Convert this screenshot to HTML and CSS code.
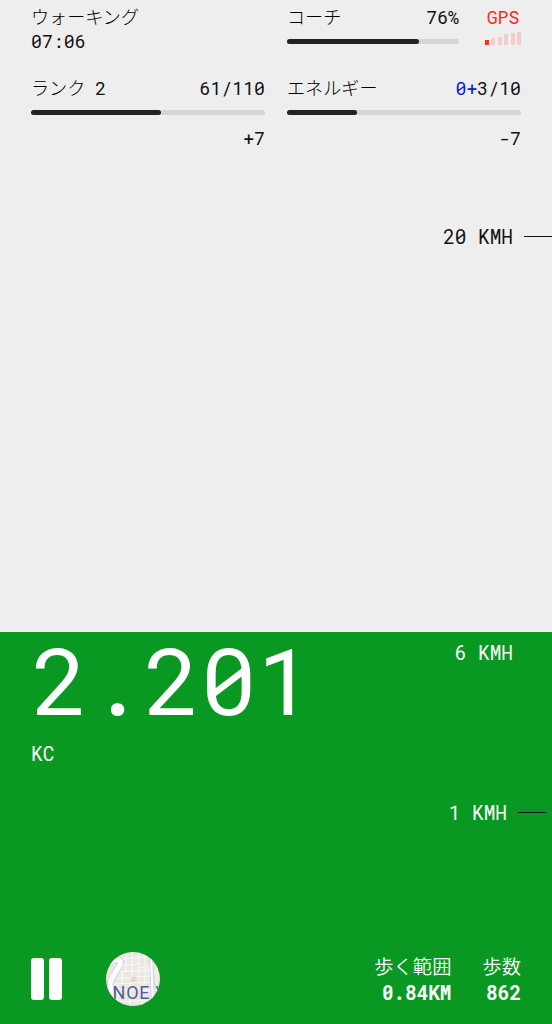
FILE: index.html
```html
<!DOCTYPE html>
<html lang="ja">
<head>
    <meta charset="UTF-8">
    <meta name="viewport" content="width=device-width, initial-scale=1.0">
    <title>ウォーキング</title>
    <link rel="stylesheet" href="styles.css">
</head>
<body>
    <main class="screen">
        <!-- 上部: ステータス -->
        <section class="top">
            <div class="stats">
                <div class="stat">
                    <div class="row"><span class="jp">ウォーキング</span></div>
                    <div class="time">07:06</div>
                </div>
                <div class="coach-group">
                    <div class="stat coach">
                        <div class="row"><span class="jp">コーチ</span><span>76%</span></div>
                        <div class="bar"><div class="bar-fill" style="width: 76.5%"></div></div>
                    </div>
                    <div class="gps">
                        <div class="row">GPS</div>
                        <div class="signal">
                            <i class="on" style="height: 5px"></i>
                            <i style="height: 7px"></i>
                            <i style="height: 8px"></i>
                            <i style="height: 11px"></i>
                            <i style="height: 12px"></i>
                            <i style="height: 13px"></i>
                        </div>
                    </div>
                </div>
                <div class="stat">
                    <div class="row"><div class="rank"><span class="jp">ランク</span><span>2</span></div><span>61/110</span></div>
                    <div class="bar"><div class="bar-fill" style="width: 55.5%"></div></div>
                    <div class="change">+7</div>
                </div>
                <div class="stat">
                    <div class="row"><span class="jp">エネルギー</span><span><span class="bonus">0+</span>3/10</span></div>
                    <div class="bar"><div class="bar-fill" style="width: 30%"></div></div>
                    <div class="change">-7</div>
                </div>
            </div>
            <div class="mark mark-max">20 KMH<span class="tick"></span></div>
        </section>

        <!-- 下部: 現在の値 -->
        <section class="bottom">
            <div class="current">
                <div>
                    <div class="score">2.201</div>
                    <div class="unit">KC</div>
                </div>
                <div class="speed">6 KMH</div>
            </div>
            <div class="mark mark-min">1 KMH<span class="tick"></span></div>
            <div class="footer">
                <button class="pause" type="button" aria-label="一時停止"><i></i><i></i></button>
                <!-- 地図 -->
                <svg class="map" viewBox="0 0 54 54">
                    <defs><clipPath id="round"><circle cx="27" cy="27" r="27"/></clipPath></defs>
                    <g clip-path="url(#round)">
                        <rect width="54" height="54" fill="#ebe7e2"/>
                        <path d="M17 7L46 4M14 14L32 12M32 16L46 14M12 20L46 18M9 26H26M30 25L46 24M5 32L46 30M0 38H54M0 50L54 48M20 4V20M26 0V32M33 0V30M39 3V32M16 20V32M43 14V24M12 32V54M24 32V54M36 32V54M51 0V54" stroke="#faf9f8" stroke-width="1" fill="none"/>
                        <rect x="25.500" y="25" width="4" height="5" fill="#e0d8bd"/>
                        <path d="M3 12C10 5 16 7 14 13L7 24C2 31 5 38 7 54" stroke="#d0d4e4" stroke-width="7" fill="none"/>
                        <path d="M3 12C10 5 16 7 14 13L7 24C2 31 5 38 7 54" stroke="#fff" stroke-width="5" fill="none"/>
                        <path d="M45 0L47 54" stroke="#d0d4e4" stroke-width="4"/>
                        <path d="M45 0L47 54" stroke="#fff" stroke-width="2"/>
                        <text class="map-label" x="6.500" y="46.500">NOE V</text>
                    </g>
                </svg>
                <div class="totals">
                    <div><div class="jp">歩く範囲</div><strong>0.84KM</strong></div>
                    <div><div class="jp">歩数</div><strong>862</strong></div>
                </div>
            </div>
        </section>
    </main>
</body>
</html>
```

FILE: styles.css
```css
* {
    box-sizing: border-box;
}

body {
    margin: 0;
    background: #eee;
    color: #111;
    font-family: "Roboto Mono", "Liberation Mono", "Noto Sans CJK JP", monospace;
    font-size: 18.2px;
    line-height: 24px;
}

.screen {
    display: flex;
    flex-direction: column;
    height: 1024px;
}

.jp {
    font-family: "Noto Sans CJK JP", sans-serif;
    font-size: 18.1px;
    font-weight: 300;
}

/* 上部 */
.top {
    height: 632px;
    padding-top: 5px;
}

.stats {
    display: grid;
    grid-template-columns: 234px 234px;
    grid-template-rows: 71px 82px;
    column-gap: 22px;
    padding-left: 31px;
}

.stat .jp {
    margin-top: -1px;
    color: #000;
}

.row {
    display: flex;
    justify-content: space-between;
    height: 24px;
}

.rank {
    display: flex;
    gap: 10px;
}

.coach-group {
    display: flex;
    justify-content: space-between;
}

.coach {
    width: 172px;
}

.bar {
    height: 5px;
    margin-top: 10px;
    border-radius: 3px;
    background: #d5d5d6;
}

.bar-fill {
    height: 5px;
    border-radius: 3px;
    background: #222;
}

.change {
    margin-top: 11px;
    text-align: right;
}

.bonus {
    color: #1019d8;
}

.gps {
    width: 36px;
    color: #f52a1c;
}

.gps .row {
    justify-content: center;
}

.signal {
    display: flex;
    justify-content: space-between;
    align-items: flex-end;
    height: 16px;
}

.signal i {
    width: 4px;
    background: #f3cdc7;
}

.signal .on {
    background: #f5350f;
}

/* 速度の目盛り */
.mark {
    display: flex;
    justify-content: flex-end;
    align-items: center;
    font-size: 19.4px;
}

.mark-max {
    margin-top: 67px;
}

.tick {
    width: 28px;
    height: 1px;
    margin: -1px 0 0 11px;
    background: #111;
}

/* 下部 */
.bottom {
    display: flex;
    flex-direction: column;
    height: 392px;
    background: #099821;
    color: #fff;
}

.current {
    display: flex;
    justify-content: space-between;
    padding: 0 39px 0 31px;
}

.score {
    height: 100px;
    margin-left: 1px;
    font-size: 93.6px;
    line-height: 94px;
}

.unit {
    margin-top: 10px;
    font-size: 19.5px;
}

.speed {
    margin-top: 9px;
    font-size: 19.4px;
}

.mark-min {
    margin: 35px 6px 0 0;
}

.footer {
    display: flex;
    align-items: center;
    height: 54px;
    margin-top: 127px;
    padding: 0 31px;
}

.pause {
    display: flex;
    gap: 5px;
    padding: 0;
    border: 0;
    background: none;
}

.pause i {
    width: 13px;
    height: 42px;
    border-radius: 3px;
    background: #fff;
}

.map {
    width: 54px;
    height: 54px;
    margin-left: 44px;
}

.map-label {
    fill: #565f91;
    font-family: Roboto, sans-serif;
    font-size: 18px;
    letter-spacing: 0.8px;
}

.totals {
    display: flex;
    gap: 31px;
    margin-left: auto;
    line-height: 26px;
    text-align: right;
}

.totals .jp {
    font-size: 19.3px;
    font-weight: 350;
}

.totals strong {
    display: block;
    margin-top: 1px;
    font-size: 19.3px;
}
```
